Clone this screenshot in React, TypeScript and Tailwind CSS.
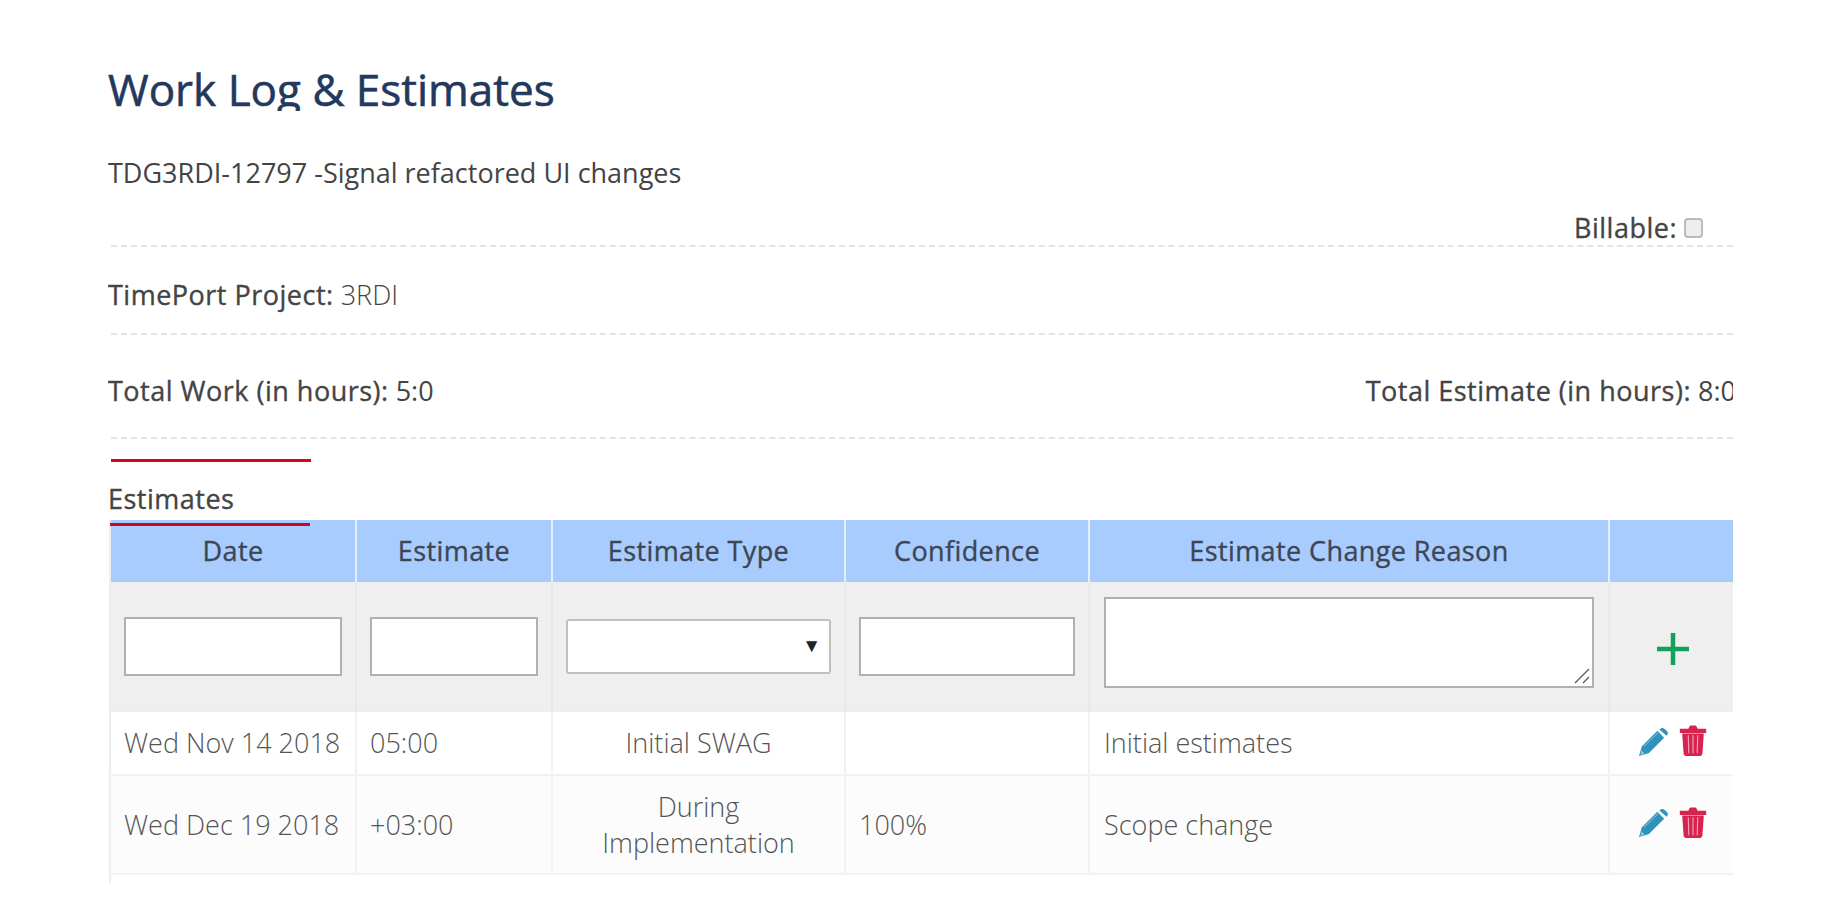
import React from "react";

const Pencil = () => (
  <svg width="31" height="31" viewBox="0 0 32 32" className="block">
    <path fill="#2f93ba" d="M1 31 L4 21 L20 5 L27 12 L11 28 Z" />
    <path fill="#ffffff" d="M3.500 25 L7 28.500 L2.600 30 Z" opacity="0.45" />
    <path fill="#2f93ba" d="M22 3.600 C24 1.500 26 1.500 27.500 3 L30 5.500 C31.200 7 31 8.500 29.600 10 Z" />
    <path stroke="#ffffff" strokeOpacity="0.5" strokeWidth="1" d="M6 21 L21 6.500" />
  </svg>
);

const Trash = () => (
  <svg width="28" height="32" viewBox="0 0 28 34" className="block">
    <path fill="#d9234f" d="M0 4 H9 L10 2 C10.500 1 11 0.500 12 0.500 H16 C17 0.500 17.500 1 18 2 L19 4 H28 V8.500 H0 Z" />
    <path fill="#d9234f" d="M2.500 9 H25.500 L24 30 C23.800 32 22.500 33 21 33 H7 C5.500 33 4.200 32 4 30 Z" />
    <path stroke="#f3a3b8" strokeWidth="1.200" d="M9 11 L9.500 30 M14 11 V30 M19 11 L18.500 30" />
  </svg>
);

const Plus = () => (
  <svg width="32" height="32" viewBox="0 0 32 32" className="block">
    <path stroke="#12a05c" strokeWidth="4.500" d="M16 0 V32 M0 16 H32" />
  </svg>
);

const th = "border-l-2 border-[#e6eefb] font-normal tracking-[0.4px] [-webkit-text-stroke:0.35px_#3c4654] text-[27px] text-center text-[#3c4654] align-middle p-0 first:border-l-0";
const filterTd = "border-l-2 border-[#e8e8e8] first:border-l-0 px-[13px] align-middle";
const td = "border-l-2 border-[#f2f2f2] first:border-l-0 px-[13px] font-light text-[#555] text-[27px] leading-[36px] align-middle";
const input = "block w-full h-[59px] bg-white border-2 border-[#b0b0b0]";
const label = "font-normal tracking-[0.5px] [-webkit-text-stroke:0.35px_#444444]";

export default function App() {
  return (
    <div className="w-[1840px] h-[900px] overflow-hidden bg-white pl-[108px] font-['Open_Sans',sans-serif] text-[#444]">
      <div className="w-[1625px] overflow-hidden">
        <h1 className="mt-[60px] h-[51px] overflow-hidden whitespace-nowrap text-[44px] leading-[58px] font-normal [-webkit-text-stroke:0.6px_#22385c] text-[#22385c]">Work Log &amp; Estimates</h1>

        <p className="mt-[47px] whitespace-nowrap text-[27px] leading-[30px] text-[#444]">TDG3RDI-12797 -Signal refactored UI changes</p>

        <div className="ml-[3px] mt-[24px] flex h-[32px] items-center justify-end pr-[30px]">
          <span className={"text-[27px] text-[#444] " + label}>Billable:</span>
          <span className="ml-[7px] h-[20px] w-[19px] rounded-[4px] border-2 border-[#bbbbbb] bg-[#eeeeee]"></span>
        </div>
        <div className="ml-[3px] mt-[1px] border-t-2 border-dashed border-[#e4e4e4]"></div>

        <div className="mt-[33px] whitespace-nowrap text-[27px] leading-[30px]"><span className={label}>TimePort Project:</span> <span className="font-light">3RDI</span></div>
        <div className="ml-[3px] mt-[23px] border-t-2 border-dashed border-[#e4e4e4]"></div>

        <div className="mt-[41px] flex justify-between whitespace-nowrap text-[27px] leading-[30px]">
          <span><span className={label}>Total Work (in hours):</span> 5:0</span>
          <span className="-mr-[3px]"><span className={label}>Total Estimate (in hours):</span> 8:0</span>
        </div>
        <div className="ml-[3px] mt-[31px] border-t-2 border-dashed border-[#e4e4e4]"></div>

        <div className="ml-[3px] mt-[20px] h-[3px] w-[200px] bg-[#d0061f]"></div>
        <div className={"mt-[21px] h-[32px] text-[27px] leading-[32px] " + label}>Estimates</div>

        <div className="relative ml-[1px] mt-[5px]">
          <div className="absolute left-[1px] top-[3px] h-[3px] w-[200px] bg-[#d0061f]"></div>
          <table className="w-[1624px] table-fixed border-collapse border-l-2 border-[#eeeeee]">
            <colgroup>
              <col className="w-[246px]" />
              <col className="w-[196px]" />
              <col className="w-[293px]" />
              <col className="w-[244px]" />
              <col className="w-[520px]" />
              <col className="w-[125px]" />
            </colgroup>
            <thead>
              <tr className="h-[62px] bg-[#a9ccff]">
                <th className={th}>Date</th>
                <th className={th}>Estimate</th>
                <th className={th}>Estimate Type</th>
                <th className={th}>Confidence</th>
                <th className={th}>Estimate Change Reason</th>
                <th className={th}></th>
              </tr>
            </thead>
            <tbody>
              <tr className="h-[129px] bg-[#efefef] border-b-2 border-[#eeeeee]">
                <td className={filterTd}><div className={input}></div></td>
                <td className={filterTd}><div className={input}></div></td>
                <td className={filterTd}>
                  <div className="relative h-[55px] rounded-[3px] border-2 border-[#c0c0c0] bg-white">
                    <span className="absolute right-[8px] top-[12px] text-[19px] leading-[24px] text-[#222]">▼</span>
                  </div>
                </td>
                <td className={filterTd}><div className={input}></div></td>
                <td className={filterTd + " px-[14px]"}>
                  <div className="relative mb-[8px] h-[91px] bg-white border-2 border-[#b0b0b0]">
                    <svg width="18" height="18" viewBox="0 0 18 18" className="absolute bottom-[1px] right-[1px]">
                      <path stroke="#555" strokeWidth="1.200" d="M2 16 L16 2 M10 16 L16 10" />
                    </svg>
                  </div>
                </td>
                <td className={filterTd}><div className="mt-[5px] ml-[1px] flex justify-center"><Plus /></div></td>
              </tr>
              <tr className="h-[64px] bg-white border-b-2 border-[#f2f2f2]">
                <td className={td + " whitespace-nowrap"}>Wed Nov 14 2018</td>
                <td className={td}>05:00</td>
                <td className={td + " text-center"}>Initial SWAG</td>
                <td className={td}></td>
                <td className={td + " px-[14px]"}>Initial estimates</td>
                <td className={td + " px-0"}><div className="flex -translate-y-[2px] items-center justify-center gap-[10px]"><Pencil /><Trash /></div></td>
              </tr>
              <tr className="h-[99px] bg-[#fcfcfc] border-b-2 border-[#f2f2f2]">
                <td className={td + " whitespace-nowrap"}>Wed Dec 19 2018</td>
                <td className={td}>+03:00</td>
                <td className={td + " text-center"}>During<br />Implementation</td>
                <td className={td}>100%</td>
                <td className={td + " px-[14px]"}>Scope change</td>
                <td className={td + " px-0"}><div className="flex -translate-y-[2px] items-center justify-center gap-[10px]"><Pencil /><Trash /></div></td>
              </tr>
            </tbody>
          </table>
          <div className="h-[8px] border-l-2 border-[#eeeeee]"></div>
        </div>
      </div>
    </div>
  );
}
